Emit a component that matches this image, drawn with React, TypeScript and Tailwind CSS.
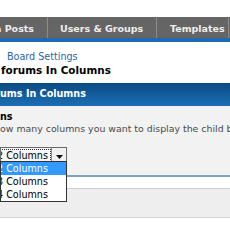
export default function App() {
  const font = { fontFamily: '"DejaVu Sans", Verdana, sans-serif' };
  return (
    <div
      className="relative w-[230px] h-[230px] overflow-hidden bg-white text-black"
      style={font}
    >
      {/* top spacer */}
      <div className="h-[17px] bg-white" />

      {/* nav tabs */}
      <div className="flex h-[21px] bg-[#656565] text-[9.5px] font-bold text-[#eeeeee] whitespace-nowrap">
        <div className="flex w-[48px] shrink-0 items-center justify-end overflow-hidden border-r border-[#8c8c8c] pr-[13px] pt-[3px]">
          Media Posts
        </div>
        <div className="flex w-[109px] shrink-0 items-center border-r border-[#8c8c8c] pl-[12px] pt-[3px]">
          Users &amp; Groups
        </div>
        <div className="flex w-[72px] shrink-0 items-center border-r border-[#8c8c8c] pl-[13px] pt-[3px]">
          Templates
        </div>
      </div>
      <div className="h-[4px] bg-[#1b6cb0]" />

      {/* breadcrumb + title */}
      <div className="h-[41px] whitespace-nowrap">
        <div className="h-[8px]" />
        <div className="pl-[7px] text-[9.6px] leading-[13px] text-[#2b66a8]">
          Board Settings
        </div>
        <div className="pl-[1px] text-[10.4px] font-bold leading-[14px]">
          forums In Columns
        </div>
      </div>

      {/* section header */}
      <div className="flex h-[23px] items-center bg-gradient-to-b from-[#0a4a82] to-[#1b6fb4] text-[9.6px] font-bold text-white whitespace-nowrap">
        ums In Columns
      </div>

      {/* setting row */}
      <div className="h-[69px] bg-[#f2f2f2] whitespace-nowrap">
        <div className="h-[5px]" />
        <div className="text-[9.6px] font-bold leading-[12px]">ns</div>
        <div className="text-[9.4px] leading-[12px] text-[#4a4a4a]">
          ow many columns you want to display the child boards in.
        </div>
        <div className="h-[12px]" />
        <div className="flex h-[19px] w-[67px] border border-[#6a6a6a] bg-[#f7f7f7]">
          <div className="flex flex-1 items-center overflow-hidden">
            <div className="-ml-[6px] flex h-[15px] items-center border border-dotted border-[#333] pl-[1px] pr-[2px] text-[9.6px]">
              2 Columns
            </div>
          </div>
          <div className="flex w-[15px] items-center justify-center border-l border-[#8a8a8a] bg-[#f0f0f0]">
            <svg width="7" height="4" viewBox="0 0 7 4">
              <path d="M0 0h7L3.5 4z" fill="#111" />
            </svg>
          </div>
        </div>
      </div>

      {/* rows behind the open list */}
      <div className="h-[2px] bg-[#7fa2be]" />
      <div className="h-[11px] bg-white" />
      <div className="h-[29px] border-t border-[#cfcfcf] bg-[#eeeeee]" />
      <div className="h-[13px] border-t border-[#d6d6d6] bg-white" />

      {/* open dropdown list */}
      <div className="absolute left-0 top-[161px] w-[67px] overflow-hidden border border-[#333] bg-white text-[9.6px] leading-[13px] whitespace-nowrap">
        <div className="bg-[#3399ff] text-white">
          <div className="-ml-[4px]">2 Columns</div>
        </div>
        <div className="-ml-[4px]">3 Columns</div>
        <div className="-ml-[4px]">4 Columns</div>
      </div>
    </div>
  );
}
